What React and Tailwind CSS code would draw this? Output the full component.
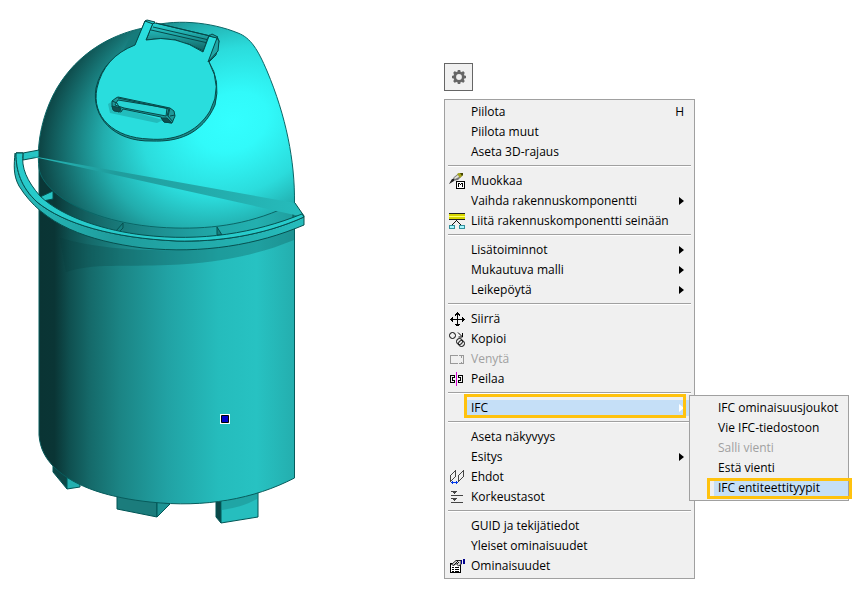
import React from 'react';

const mainGroups = [
  [
    { label: 'Piilota', shortcut: 'H' },
    { label: 'Piilota muut' },
    { label: 'Aseta 3D-rajaus' },
  ],
  [
    { label: 'Muokkaa', icon: EditIcon },
    { label: 'Vaihda rakennuskomponentti', arrow: true },
    { label: 'Liitä rakennuskomponentti seinään', icon: AttachIcon },
  ],
  [
    { label: 'Lisätoiminnot', arrow: true },
    { label: 'Mukautuva malli', arrow: true },
    { label: 'Leikepöytä', arrow: true },
  ],
  [
    { label: 'Siirrä', icon: MoveIcon },
    { label: 'Kopioi', icon: CopyIcon },
    { label: 'Venytä', icon: StretchIcon, disabled: true },
    { label: 'Peilaa', icon: MirrorIcon },
  ],
  [
    {
      label: 'IFC',
      arrow: true,
      submenu: [
        { label: 'IFC ominaisuusjoukot' },
        { label: 'Vie IFC-tiedostoon' },
        { label: 'Salli vienti', disabled: true },
        { label: 'Estä vienti' },
        { label: 'IFC entiteettityypit', active: true },
      ],
    },
  ],
  [
    { label: 'Aseta näkyvyys' },
    { label: 'Esitys', arrow: true },
    { label: 'Ehdot', icon: ConstraintIcon },
    { label: 'Korkeustasot', icon: LevelsIcon },
  ],
  [
    { label: 'GUID ja tekijätiedot' },
    { label: 'Yleiset ominaisuudet' },
    { label: 'Ominaisuudet', icon: PropertiesIcon },
  ],
];

function Icon({ children }) {
  return (
    <svg width="16" height="16" viewBox="0 0 16 16" fill="none" shapeRendering="crispEdges" aria-hidden="true">
      {children}
    </svg>
  );
}

function EditIcon() {
  return (
    <Icon>
      <g shapeRendering="auto">
        <path d="M0 11L5 4l5-4h3v3L9 7l-5 1z" fill="#777" />
        <path d="M8 1l2-1h4v2l-3 3z" fill="#a6a61c" />
        <path d="M11 0h3v2l-1 1z" fill="#444400" />
        <path d="M5 5l4-3 1 2-4 2z" fill="#e4e4d8" />
        <path d="M0 11l3-5h2v2z" fill="#222" />
      </g>
      <path d="M7.500 8.500h8v7h-8z" fill="#fff" stroke="#000" />
      <path d="M9.500 14v-4M13.500 14v-4M10 10.500h1M12 10.500h1M11 11.500h1" stroke="#000" />
    </Icon>
  );
}

function AttachIcon() {
  return (
    <Icon>
      <path d="M0 0h16v1H0zM0 6h16v1H0z" fill="#222" />
      <path d="M0 1h16v5H0z" fill="#d6d600" />
      <path d="M0 3h16v1H0z" fill="#ffff70" />
      <path d="M7.500 7v1M6.500 8v1M5.500 9v1M4.500 10v1M3.500 11v1M8.500 8v1M9.500 9v1M10.500 10v1M11.500 11v1" stroke="#111" />
      <path d="M.5 12.500h5v3h-5zM10.500 12.500h5v3h-5z" fill="#a8f8ff" stroke="#338f9c" />
    </Icon>
  );
}

function MoveIcon() {
  return (
    <Icon>
      <path d="M8.500 1v14M1 8.500h15M7 3.500h3M6 4.500h1M10 4.500h1M7 13.500h3M3.500 7v3M13.500 7v3" stroke="#000" />
      <path d="M7 2.500h3M6 3.500h5M7 14.500h3M6 13.500h5M2.500 7v3M3.500 6v5M14.500 7v3M13.500 6v5" stroke="#000" />
    </Icon>
  );
}

function CopyIcon() {
  return (
    <Icon>
      <g stroke="#000" shapeRendering="auto">
        <circle cx="3.500" cy="4.500" r="3" />
        <circle cx="10.500" cy="10.500" r="3" />
        <circle cx="12.500" cy="12.500" r="3" />
        <path d="M9 1.500l4 4M13.500 2v4h-4" />
      </g>
    </Icon>
  );
}

function StretchIcon() {
  return (
    <Icon>
      <path d="M9 4.500H1.500v8H9M10 4.500h4.500v8H10M12 4.500v2M12 12.500v-2" stroke="#999" />
    </Icon>
  );
}

function MirrorIcon() {
  return (
    <Icon>
      <path d="M6 4.500H1.500v7H6M6 6.500H3.500v3H6M5.500 4v3M5.500 9v3M9 4.500h4.500v7H9M9 6.500h2.500v3H9M9.500 4v3M9.500 9v3" stroke="#000" />
      <path d="M7.500 1v14" stroke="#d400d4" />
    </Icon>
  );
}

function ConstraintIcon() {
  return (
    <Icon>
      <path d="M1.500 6.500l5-5v6l-5 5zM9.500 6.500l5-5v6l-5 5z" stroke="#444" />
      <path d="M2 13.500h7M3.500 12v3M7.500 12v3" stroke="#0037e6" />
    </Icon>
  );
}

function LevelsIcon() {
  return (
    <Icon>
      <path d="M2 2.500h6M4 3.500h3M5 4.500h1M2 6.500h12M2 9.500h6M4 10.500h3M5 11.500h1M2 13.500h12" stroke="#444" />
    </Icon>
  );
}

function PropertiesIcon() {
  return (
    <Icon>
      <path d="M1.500 5.500h10v9h-10z" fill="#fff" stroke="#000" />
      <path d="M3 9.500h2M6 9.500h4M3 11.500h2M6 11.500h4M3 13h2M6 13h4" stroke="#000" />
      <path d="M2.500 6.500L7 2.500h5v4L9.500 8 7 5.500l-2 2z" fill="#ddd" stroke="#222" shapeRendering="auto" />
      <path d="M6 5.500h1M8 5.500h1M7 4.500h1M9 4.500h1M8 3.500h1M5 6.500h1" stroke="#111" />
      <path d="M12 2h1v4h-1zM14 1h2v5h-2z" fill="#00008b" />
    </Icon>
  );
}

function MenuItem({ item, iconColumn }) {
  const ItemIcon = item.icon;
  const open = Boolean(item.submenu);
  const highlighted = open || item.active;
  return (
    <li role="none" className="relative">
      <button
        type="button"
        role="menuitem"
        disabled={item.disabled}
        aria-haspopup={item.submenu || item.arrow ? 'menu' : undefined}
        aria-expanded={open || undefined}
        className="flex h-5 w-full items-center text-left text-black disabled:text-[#a0a0a0]"
      >
        <span className={iconColumn ? 'w-5 shrink-0 pl-0.5' : 'w-5 shrink-0'}>{ItemIcon && <ItemIcon />}</span>
        <span className={`flex h-4 flex-1 items-center justify-between pr-2 pl-1 ${highlighted ? 'bg-[#c5dff7]' : ''}`}>
          <span className="whitespace-nowrap">{item.label}</span>
          {item.shortcut && <span>{item.shortcut}</span>}
          {item.arrow && (
            <svg width="5" height="8" viewBox="0 0 5 8" aria-hidden="true">
              <path d="M0 0l5 4-5 4z" fill={open ? '#fff' : '#000'} />
            </svg>
          )}
        </span>
      </button>
      {open && (
        <>
          <span className="pointer-events-none absolute -top-1 right-1.5 left-[17px] h-6 border-3 border-[#ffc20e]" />
          <Menu groups={[item.submenu]} className="absolute -top-[3px] left-[242px] z-10 w-40 pl-1" />
        </>
      )}
      {item.active && (
        <span className="pointer-events-none absolute top-0 -right-1 left-[13px] h-[21px] border-3 border-[#ffc20e]" />
      )}
    </li>
  );
}

function Menu({ groups, className, iconColumn }) {
  return (
    <div role="menu" className={`border border-[#a0a0a0] bg-[#f0f0f0] py-0.5 ${className}`}>
      {groups.map((group, i) => (
        <ul
          key={i}
          role="group"
          className={i > 0 ? 'before:mx-px before:mt-[3px] before:mb-1 before:block before:h-0.5 before:border-t before:border-[#a0a0a0] before:bg-white' : ''}
        >
          {group.map((item) => (
            <MenuItem key={item.label} item={item} iconColumn={iconColumn} />
          ))}
        </ul>
      ))}
    </div>
  );
}

function GearButton() {
  return (
    <button type="button" aria-label="Asetukset" className="flex h-7 w-[29px] items-center justify-center border border-[#666] bg-[#f0f0f0]">
      <svg width="14" height="14" viewBox="0 0 14 14" aria-hidden="true">
        <circle cx="7" cy="7" r="4.300" fill="none" stroke="#666" strokeWidth="2.800" />
        <path d="M7 0v2M7 12v2M0 7h2M12 7h2M2 2l1.500 1.500M10.500 10.500L12 12M12 2l-1.500 1.500M3.500 10.500L2 12" stroke="#666" strokeWidth="2.600" />
      </svg>
    </button>
  );
}

function WasteBin() {
  return (
    <svg viewBox="0 0 444 598" className="h-auto w-full" role="img" aria-label="3D-malli jäteastiasta">
      <defs>
        <linearGradient id="body" gradientUnits="userSpaceOnUse" x1="39" y1="0" x2="295" y2="0">
          <stop offset="0" stopColor="#0a3434" />
          <stop offset=".06" stopColor="#0a3535" />
          <stop offset=".12" stopColor="#0f5050" />
          <stop offset=".2" stopColor="#156a6a" />
          <stop offset=".32" stopColor="#1b8585" />
          <stop offset=".5" stopColor="#21a2a4" />
          <stop offset=".7" stopColor="#25bcbc" />
          <stop offset=".85" stopColor="#27c2c2" />
          <stop offset="1" stopColor="#24aeae" />
        </linearGradient>
        <radialGradient id="dome" gradientUnits="userSpaceOnUse" cx="0" cy="0" r="1" gradientTransform="translate(232 122) rotate(-24) scale(205 158)">
          <stop offset="0" stopColor="#33ffff" />
          <stop offset=".18" stopColor="#31fafa" />
          <stop offset=".45" stopColor="#2bdcdc" />
          <stop offset=".65" stopColor="#22adad" />
          <stop offset=".82" stopColor="#177676" />
          <stop offset="1" stopColor="#0b3c3c" />
        </radialGradient>
        <linearGradient id="rim" gradientUnits="userSpaceOnUse" x1="15" y1="0" x2="304" y2="0">
          <stop offset="0" stopColor="#26bcbc" />
          <stop offset=".35" stopColor="#1f9c9c" />
          <stop offset="1" stopColor="#26bcbc" />
        </linearGradient>
        <linearGradient id="bar" x1="0" y1="0" x2="0" y2="1">
          <stop offset="0" stopColor="#29d5d5" />
          <stop offset="1" stopColor="#105c5c" />
        </linearGradient>
      </defs>

      {/* Feet */}
      <g stroke="#055" strokeLinejoin="round">
        <path d="M53 464v8l14 17v-14z" fill="#0d4646" />
        <path d="M67 475v14l13-2v-7z" fill="#23b0b0" />
        <path d="M117 494v15l40 8v-16z" fill="#1b7c7c" />
        <path d="M157 501v16l13-13z" fill="#1e9494" />
        <path d="M216 500v17l5 6v-23z" fill="#0c4848" />
        <path d="M221 500v23l37-6v-25z" fill="#26bebe" />
      </g>
      <path d="M222 502v8q22-3 35-11v-6z" fill="#20a5a5" />

      {/* Body */}
      <path
        d="M39 165V435C40 449 46 459 54 467C75 488 112 498 150 502C205 508 254 499 294.500 478V200z"
        fill="url(#body)"
        stroke="#075c5c"
      />
      <path d="M60 238C100 249 142 251 180 250C226 249 262 241 294 228V240C255 256 216 263 168 265C125 267 92 263 66 272z" fill="#073c3c" opacity=".25" />
      <path d="M39 167C50 198 90 223 160 228C210 230 256 221 294 203V227C220 256 85 252 39 211z" fill="#0b4545" opacity=".15" />

      {/* Dome */}
      <path
        d="M39 168C36 143 43 112 57 88C78 53 110 35 143 28C174 18 211 22 238 33C251 38 258 50 267 71C286 116 295 161 294.500 203C253 224 214 229 175 228C129 227 89 216 62 198C47 187 40 177 39 168z"
        fill="url(#dome)"
        stroke="#0a6666"
      />

      {/* Handle ring */}
      <g stroke="#06504f" strokeLinejoin="round">
        <path d="M16 153l7 0 16-3v7l-16 3v-7zM40 197l13-6v8l-10 2z" fill="#27c5c5" />
        <path d="M116 231l7-8 0 5-5 5zM217 227l5 8h-5z" fill="#168080" />
        <path d="M293 204l11 12-11 4z" fill="#178484" />
        <path
          d="M15 153C14 165 13 175 19 186C43 225 88 241 143 248C203 254 257 245 304 225V216L295 203M304 217C262 236 216 242 177 241C113 238 64 224 37 202C21 187 16 171 16 153"
          fill="url(#rim)"
        />
        <path
          d="M16 153h7C21 168 27 181 40 196C63 218 108 231 143 235C201 242 255 233 302 214L304 217C262 236 216 242 177 241C113 238 64 224 37 202C21 187 16 171 16 153z"
          fill="#27cbcb"
        />
      </g>

      {/* Lid and its hinge */}
      <path d="M132 34l11-3-7 14-13 6z" fill="#167b7b" />
      <g stroke="#064848" strokeLinejoin="round">
        <path d="M152 24l3-1 60 14-9 15q-32-17-60-12z" fill="url(#bar)" />
        <path d="M153 27l56 13M151 30l57 13M156 23l54 13" />
        <path d="M135 46l10-25 8 2-7 17q30-6 57 12l6-17 8 2 2 4-3 14-7 7q12 19 6 43c-13 30-38 37-63 36C114 142 91 117 96 88Q103 58 135 46z" fill="#1b8f8f" />
        <path d="M135 45l10-24 8 2-7 17q30-6 57 12l6-16 9 2-9 24q14 25 1 49c-14 23-37 30-61 28C114 138 91 117 97 88Q104 57 135 45z" fill="#29dddd" />
        <path d="M209 36l3-2 6 3-1 1zM217 38l2 3-1 10-10 11z" fill="#20a6a6" />
        <path d="M145 21l2-1 8 2-2 2z" fill="#27c8c8" />
      </g>

      {/* Grip */}
      <path d="M108 104l5-3v5l50 14-6 3-47-10z" fill="#22bcbc" />
      <g stroke="#064848" strokeLinejoin="round">
        <path d="M112 106v-5l4-3 2-1 52 11 4 3 1 5-3 7-8-1-3-5-38-8-2 3-7-1z" fill="#1d9999" />
        <path d="M115 105l3-5 49 8-1 8-42-8z" fill="#28d3d3" />
        <path d="M118 98l51 11-2 7M112 101l5 2 4 8M170 108l-2 8 5 6M175 115l-5 1" fill="none" />
        <path d="M112 106l9 2-2 4-6-2zM161 118l6 0 5 5-8-1z" fill="#104f4f" />
      </g>

      {/* Hotspot */}
      <path d="M220 414h10v10h-10z" fill="#fff" />
      <path d="M221.500 415.500h7v7h-7z" fill="#0000c8" stroke="#000" />
    </svg>
  );
}

export default function App() {
  return (
    <main className="grid grid-cols-[444fr_420fr] overflow-hidden bg-white font-['Open_Sans','Noto_Sans',sans-serif] text-[12px] leading-4">
      <WasteBin />
      <div className="flex flex-col items-start gap-2 pt-[63px]">
        <GearButton />
        <Menu groups={mainGroups} className="w-[251px] px-0.5" iconColumn />
      </div>
    </main>
  );
}
